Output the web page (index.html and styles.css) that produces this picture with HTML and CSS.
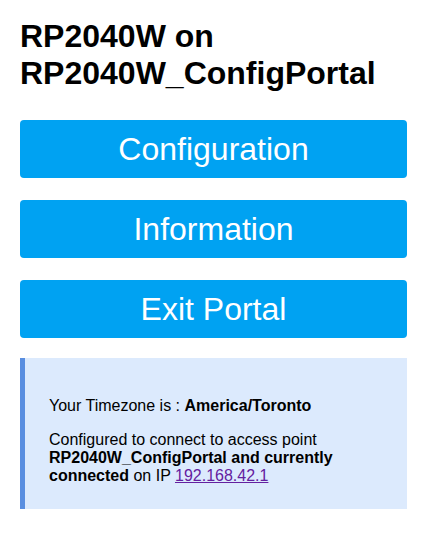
FILE: index.html
```html
<!DOCTYPE html>
<html>
<head>
<meta charset="utf-8">
<title>RP2040W_ConfigPortal</title>
<link rel="stylesheet" href="styles.css">
</head>
<body>
<div class="page">
  <h1 class="title">RP2040W on RP2040W_ConfigPortal</h1>
  <nav class="menu">
    <a class="btn" href="#">Configuration</a>
    <a class="btn" href="#">Information</a>
    <a class="btn" href="#">Exit Portal</a>
  </nav>
  <div class="msg">
    <p>Your Timezone is : <b>America/Toronto</b></p>
    <p>Configured to connect to access point <b>RP2040W_ConfigPortal and currently connected</b> on IP <a class="ip" href="#">192.168.42.1</a></p>
  </div>
</div>
</body>
</html>
```

FILE: styles.css
```css
html, body {
  margin: 0;
  padding: 0;
  background: #fff;
}
body {
  font-family: "Liberation Sans", Arial, sans-serif;
  color: #000;
}
.page {
  padding: 18px 30px 0 20px;
}
.title {
  margin: 0 0 28px 0;
  font-size: 32px;
  font-weight: bold;
  line-height: normal;
}
.menu {
  display: flex;
  flex-direction: column;
  gap: 22px;
}
.btn {
  display: flex;
  align-items: center;
  justify-content: center;
  height: 58px;
  background: #00a2f2;
  color: #fff;
  font-size: 32px;
  text-decoration: none;
  border-radius: 4px;
}
.msg {
  margin-top: 20px;
  background: #dceafd;
  border-left: 5px solid #598ee0;
  padding: 39px 40px 24px 24px;
  font-size: 16px;
  line-height: normal;
}
.msg p {
  margin: 0 0 16px 0;
}
.msg p:last-child {
  margin-bottom: 0;
}
.ip {
  color: #6420a0;
}
```
